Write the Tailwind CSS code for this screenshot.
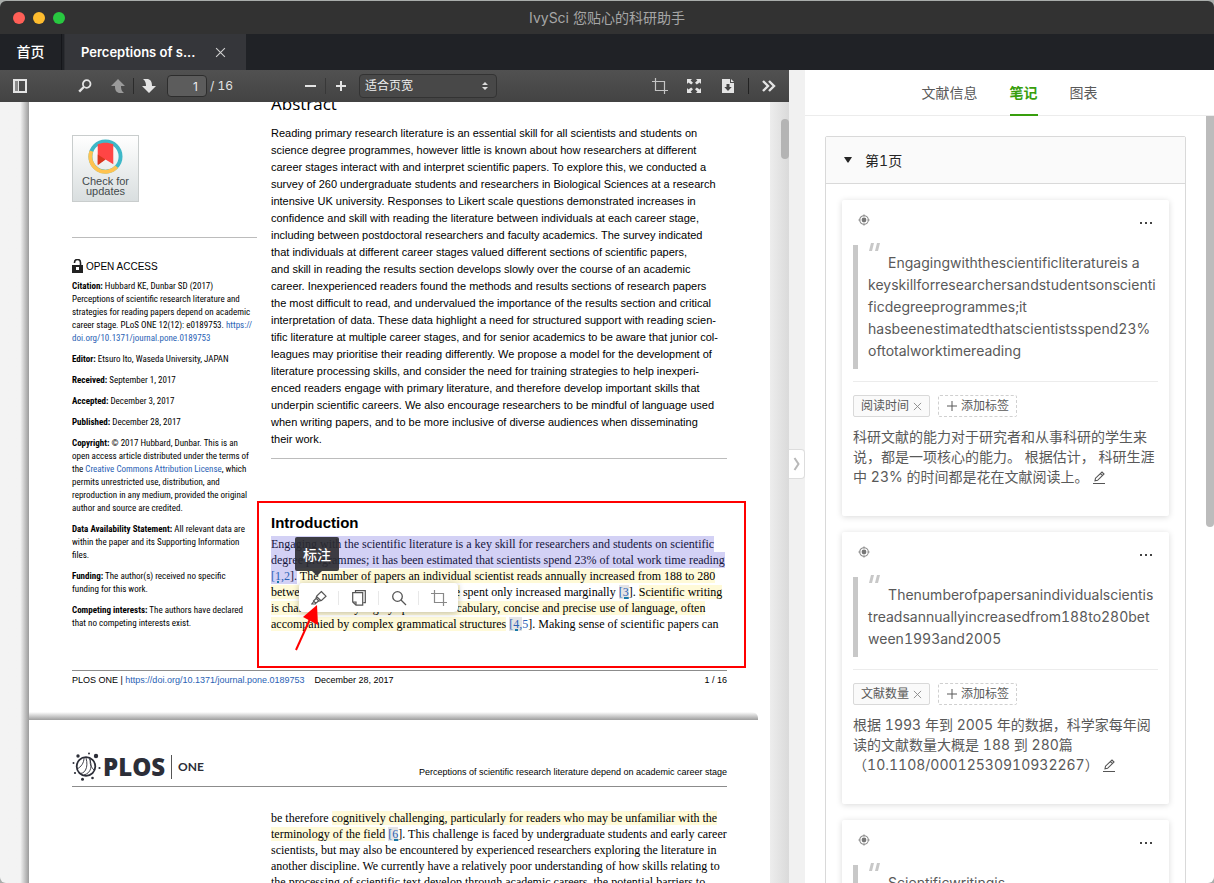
<!DOCTYPE html>
<html lang="zh-CN">
<head>
<meta charset="utf-8">
<title>IvySci 您贴心的科研助手</title>
<script src="https://cdn.jsdelivr.net/npm/@tailwindcss/browser@4"></script>
</head>
<body class="bg-[#a9adab] font-['Inter','Noto_Sans_CJK_SC',sans-serif]">
<svg class="hidden" aria-hidden="true">
  <symbol id="aim" viewBox="0 0 12 12"><g fill="none" stroke="#8c8c8c"><circle cx="6" cy="6" r="4.3" stroke-width="1.1"/><path d="M6 0.4v2M6 9.6v2M.4 6h2M9.6 6h2" stroke-width="1.2"/></g><circle cx="6" cy="6" r="2.4" fill="#777"/></symbol>
  <symbol id="dots" viewBox="0 0 14 4"><path d="M1 1h2v2H1zM6 1h2v2H6zM11 1h2v2h-2z" fill="#444"/></symbol>
  <symbol id="close" viewBox="0 0 10 10"><path d="M1 1l8 8M9 1l-8 8" fill="none" stroke="currentColor"/></symbol>
  <symbol id="plus" viewBox="0 0 12 12"><path d="M6 1v10M1 6h10" fill="none" stroke="currentColor"/></symbol>
  <symbol id="edit" viewBox="0 0 14 14"><path d="M1 12.5h12M3 9.8l.5-2.6L10 1l2 2-6.4 6.3zM8.4 2.6l2 2" fill="none" stroke="#555" stroke-width="1.1"/></symbol>
  <symbol id="crop" viewBox="0 0 16 16"><path d="M3.500 0v12.500H16M0 3.500h12.500V16" fill="none" stroke="currentColor" stroke-width="1.200"/></symbol>
</svg>
<div class="flex h-screen flex-col overflow-hidden rounded-b-md pt-px">
  <header class="relative flex h-[33px] shrink-0 items-center rounded-t-md bg-[#323232] px-[13px]">
    <div class="flex gap-2">
      <button aria-label="关闭窗口" class="size-3 rounded-full bg-[#ff5f57]"></button>
      <button aria-label="最小化" class="size-3 rounded-full bg-[#febc2e]"></button>
      <button aria-label="最大化" class="size-3 rounded-full bg-[#28c840]"></button>
    </div>
    <h1 class="pointer-events-none absolute inset-x-0 text-center text-[14px] leading-5 text-[#a6a6a6]">IvySci 您贴心的科研助手</h1>
  </header>
  <nav class="flex h-9 shrink-0 bg-[#202226] text-[14px] leading-5 font-medium text-white">
    <button class="w-[62px] border-r border-[#15161a]">首页</button>
    <div class="ml-0.5 flex w-[182px] items-center border-l border-[#2c2d31] bg-[#35363a] pl-4">
      <span class="w-[134px] text-[13px] font-semibold">Perceptions of s...</span>
      <button aria-label="关闭标签页" class="text-[#d0d0d0]"><svg class="size-[11px]"><use href="#close"/></svg></button>
    </div>
  </nav>

  <main class="flex min-h-0 flex-1">
    <section class="flex w-[65%] flex-col">
      <div class="flex h-8 shrink-0 items-center bg-linear-to-b from-[#515151] to-[#434343] px-2 text-[#e4e4e4]">
        <div class="flex w-[290px] items-center">
          <button aria-label="侧边栏" class="flex w-6 justify-center"><svg class="h-3.5 w-3.5" viewBox="0 0 14 14"><path d="M1 1h12v12H1z" fill="none" stroke="currentColor" stroke-width="2"/><path d="M2 2h3v10H2z" fill="#8a8a8a"/><path d="M5.500 1v12" stroke="currentColor" stroke-width="1"/></svg></button>
          <button aria-label="查找" class="ml-[41px] flex w-6 justify-center"><svg class="size-3.5" viewBox="0 0 14 14" fill="none" stroke="currentColor"><circle cx="8.700" cy="5" r="3.800" stroke-width="1.800"/><path d="M5.800 8L1.200 12.600" stroke-width="2.400"/></svg></button>
          <button aria-label="上一页" class="ml-[9px] flex w-6 justify-center"><svg class="size-4" viewBox="0 0 16 16"><path d="M8 1l7 7h-4c0 3 .5 5 3 7H9C6 14 5 12 5 8H1z" fill="#9a9a9a"/></svg></button>
          <i class="ml-[3px] h-4 w-px bg-[#2b2b2b]"></i>
          <button aria-label="下一页" class="ml-[3px] flex w-6 justify-center"><svg class="size-4" viewBox="0 0 16 16"><path d="M8 15L1 8h4C5 5 4.500 3 2 1h5c3 1 4 3 4 7h4z" fill="currentColor"/></svg></button>
          <input aria-label="页码" value="1" class="ml-1.5 h-[22px] w-10 rounded-sm border border-[#2d2d2d] bg-[#5c5c5c] pr-2 text-right text-[12px] text-[#eee]">
          <span class="ml-[3px] text-[12px] tabular-nums">/ 16</span>
        </div>
        <button aria-label="缩小" class="flex w-6 justify-center"><svg class="h-3 w-3" viewBox="0 0 12 12"><path d="M1 6h11" stroke="currentColor" stroke-width="2"/></svg></button>
        <i class="ml-[3px] h-4 w-px bg-[#383838]"></i>
        <button aria-label="放大" class="ml-[3px] flex w-6 justify-center"><svg class="h-3 w-3" viewBox="0 0 12 12"><path d="M1 6h10M6 1v10" stroke="currentColor" stroke-width="2"/></svg></button>
        <div class="relative ml-[6px] flex items-center">
          <select aria-label="缩放" class="h-6 w-[138px] appearance-none rounded-sm border border-[#333] bg-[#484848] pl-[5px] text-[12px] text-[#f0f0f0]"><option>适合页宽</option></select>
          <svg class="pointer-events-none absolute right-2 h-2.5 w-2" viewBox="0 0 8 10"><path d="M4 1l3 3H1zM4 9l3-3H1z" fill="#ddd"/></svg>
        </div>
        <div class="ml-auto flex items-center">
          <button aria-label="裁剪" class="mr-2.5 flex w-6 justify-center text-[#c4c4c4]"><svg class="size-4"><use href="#crop"/></svg></button>
          <button aria-label="全屏" class="mr-2.5 flex w-6 justify-center"><svg class="size-3.5" viewBox="0 0 14 14" fill="currentColor"><path d="M0 0h5L3.600 1.400 6 3.800 4.200 5.600 1.400 3.600 0 5zM14 0H9l1.400 1.400L8 3.800 9.800 5.600l2.800-2L14 5zM0 14h5l-1.400-1.400L6 10.200 4.200 8.400l-2.800 2L0 9zM14 14H9l1.400-1.400L8 10.200 9.800 8.400l2.800 2L14 9z"/></svg></button>
          <button aria-label="下载" class="mr-2 flex w-6 justify-center"><svg class="size-3.5" viewBox="0 0 14 14"><path d="M1 0h8v4h4v10H1z" fill="currentColor"/><path d="M10 0l3 3h-3z" fill="currentColor"/><path d="M5.500 5h3v3h2.200L7 12 3.300 8h2.200z" fill="#444"/></svg></button>
          <i class="mr-2 h-4 w-px bg-[#222]"></i>
          <button aria-label="更多工具" class="flex w-6 justify-center"><svg class="h-3 w-4" viewBox="0 0 16 12" fill="none" stroke="currentColor" stroke-width="2.400"><path d="M2 1l5 5-5 5M8 1l5 5-5 5"/></svg></button>
        </div>
      </div>

      <div class="relative flex min-h-0 flex-1 overflow-hidden font-['Liberation_Sans',Arial,sans-serif] text-black">
        <div class="w-[29px] shrink-0 bg-linear-to-r from-[#f3f3f3] from-70% to-[#9c9c9c]"></div>
        <div class="flex min-w-0 flex-1 flex-col bg-white">
        <article class="flex h-[610px] shrink-0 flex-col px-[43px]">
          <div class="flex flex-1 gap-3.5">
            <aside class="w-[185px] shrink-0 pt-[33px] font-['Roboto_Condensed','Open_Sans_Condensed','Liberation_Sans',sans-serif] text-[9px] leading-[13px] whitespace-nowrap">
              <a href="#" class="flex size-[67px] flex-col items-center border border-[#c9cdcd] bg-linear-to-b from-white to-[#d9dedf] pt-[3px] font-['Liberation_Sans'] text-[11px] leading-[10px] text-[#444b4d]">
                <svg class="mb-0.5 size-[35px] shrink-0" viewBox="0 0 36 36" fill="none"><circle cx="18" cy="18" r="15.500" stroke="#3eb8c8" stroke-width="4"/><path d="M3.500 12.500A15.500 15.500 0 0 0 29.500 28.500" stroke="#ffc350" stroke-width="4"/><path d="M10 5.500c5-2.300 11-2.300 16 0V26l-8-5-8 5z" fill="#ff4545"/><path d="M10 16l8 5-8 6z" fill="#d8361d"/></svg>
                <span>Check for</span><span>updates</span>
              </a>
              <hr class="mt-[35px] border-[#bcbcbc]">
              <p class="mt-[17px] flex h-[18px] items-end gap-[3px] font-['Liberation_Sans'] text-[10px]"><svg class="h-3.5 w-[11px]" viewBox="0 0 11 14"><path d="M0 6h11v8H0z" fill="#222"/><path d="M2.500 4V3.500a3 3 0 0 1 6 0V6" fill="none" stroke="#222" stroke-width="1.600"/><path d="M4 8h3v3H4z" fill="#fff"/></svg>OPEN ACCESS</p>
              <div class="mt-[7px] flex flex-col gap-2">
                <p><b>Citation:</b> Hubbard KE, Dunbar SD (2017)<br>Perceptions of scientific research literature and<br>strategies for reading papers depend on academic<br>career stage. PLoS ONE 12(12): e0189753. <a href="#" class="text-[#2a62b5]">https://<br>doi.org/10.1371/journal.pone.0189753</a></p>
                <p><b>Editor:</b> Etsuro Ito, Waseda University, JAPAN</p>
                <p><b>Received:</b> September 1, 2017</p>
                <p><b>Accepted:</b> December 3, 2017</p>
                <p><b>Published:</b> December 28, 2017</p>
                <p><b>Copyright:</b> © 2017 Hubbard, Dunbar. This is an<br>open access article distributed under the terms of<br>the <a href="#" class="text-[#2a62b5]">Creative Commons Attribution License</a>, which<br>permits unrestricted use, distribution, and<br>reproduction in any medium, provided the original<br>author and source are credited.</p>
                <p><b>Data Availability Statement:</b> All relevant data are<br>within the paper and its Supporting Information<br>files.</p>
                <p><b>Funding:</b> The author(s) received no specific<br>funding for this work.</p>
                <p><b>Competing interests:</b> The authors have declared<br>that no competing interests exist.</p>
              </div>
            </aside>
            <div class="min-w-0 flex-1 whitespace-nowrap">
              <h2 class="-mt-2 font-['Open_Sans',sans-serif] text-[17px] leading-5">Abstract</h2>
              <p class="mt-[11px] text-[11px] leading-[17px]">Reading primary research literature is an essential skill for all scientists and students on<br>science degree programmes, however little is known about how researchers at different<br>career stages interact with and interpret scientific papers. To explore this, we conducted a<br>survey of 260 undergraduate students and researchers in Biological Sciences at a research<br>intensive UK university. Responses to Likert scale questions demonstrated increases in<br>confidence and skill with reading the literature between individuals at each career stage,<br>including between postdoctoral researchers and faculty academics. The survey indicated<br>that individuals at different career stages valued different sections of scientific papers,<br>and skill in reading the results section develops slowly over the course of an academic<br>career. Inexperienced readers found the methods and results sections of research papers<br>the most difficult to read, and undervalued the importance of the results section and critical<br>interpretation of data. These data highlight a need for structured support with reading scien-<br>tific literature at multiple career stages, and for senior academics to be aware that junior col-<br>leagues may prioritise their reading differently. We propose a model for the development of<br>literature processing skills, and consider the need for training strategies to help inexperi-<br>enced readers engage with primary literature, and therefore develop important skills that<br>underpin scientific careers. We also encourage researchers to be mindful of language used<br>when writing papers, and to be more inclusive of diverse audiences when disseminating<br>their work.</p>
              <hr class="mt-[10px] border-[#bcbcbc]">
              <div class="relative mt-[54px]">
                <h2 class="text-[15px] leading-5 font-bold">Introduction</h2>
                <p class="mt-[3px] font-['Liberation_Serif',serif] text-[12px] leading-4"><span class="bg-[#d3d1f5] py-px text-[#161640]">Engaging with the scientific literature is a key skill for researchers and students on scientific<br>degree programmes; it has been estimated that scientists spend 23% of total work time reading</span><br><span class="bg-[#d3d1f5] py-px text-[#161640]"><a href="#" class="text-[#2a62b5]"><u class="decoration-[#187aa8] decoration-2">[1,</u>2</a>].</span> <span class="bg-[#fffad8]">The number of papers an individual scientist reads annually increased from 188 to 280</span><br><span class="bg-[#fffad8]">between 1993 and 2005, while the time</span> spent only increased marginally <a href="#" class="bg-[#e4e4e4] text-[#2a62b5] underline decoration-[#187aa8] decoration-2">[3</a>]. <span class="bg-[#fffad8]">Scientific writing</span><br><span class="bg-[#fffad8]">is characterised by highly specialist vocabulary, concise and precise use of language, often</span><br><span class="bg-[#fffad8]">accompanied by complex grammatical structures</span> <a href="#" class="text-[#2a62b5]"><u class="bg-[#e4e4e4] decoration-[#187aa8] decoration-2">[4,</u>5</a>]. Making sense of scientific papers can</p>
                <div class="absolute -top-3 -right-[19px] -left-3.5 h-[167px] border-2 border-[#f00]"></div>
                <div class="absolute top-6 left-6 flex h-[34px] w-11 items-center justify-center rounded-xs bg-[#2b2b30]/90 font-['Noto_Sans_CJK_SC'] text-[14px] leading-5 font-medium text-white">标注<svg class="absolute top-full h-1.5 w-3" viewBox="0 0 12 6"><path d="M1 0h10L6 5z" fill="#3a3a40"/></svg></div>
                <div class="absolute top-[70px] left-7 flex h-[29px] w-[159px] items-center rounded-sm bg-white text-[#555] shadow-[0_1px_6px_rgba(0,0,0,.25)]">
                  <button aria-label="标注" class="flex flex-1 justify-center"><svg class="size-4" viewBox="0 0 16 16" fill="none" stroke="currentColor" stroke-width="1.200"><path d="M10.300 1.500L15 6.200 10.500 10.500 7.800 11 5 8.200 5.700 6zM6 7l4 3.800M5 8.500L2.500 11l2.300 2.200L7.500 11M2.800 11.500L.8 14h3.500l.7-1"/></svg></button>
                  <i class="h-3.5 w-px bg-[#e8e8e8]"></i>
                  <button aria-label="复制" class="flex flex-1 justify-center"><svg class="size-4" viewBox="0 0 16 16" fill="none" stroke="currentColor" stroke-width="1.200"><path d="M4.500 2.700V.7h9.800v12h-2"/><path d="M1.700 2.700h10v12.500H5L1.700 12zM1.700 12H5v3"/></svg></button>
                  <i class="h-3.5 w-px bg-[#e8e8e8]"></i>
                  <button aria-label="搜索" class="flex flex-1 justify-center"><svg class="size-4" viewBox="0 0 16 16" fill="none" stroke="currentColor" stroke-width="1.300"><circle cx="6.500" cy="6.500" r="4.800"/><path d="M10 10l5 5"/></svg></button>
                  <i class="h-3.5 w-px bg-[#e8e8e8]"></i>
                  <button aria-label="截图" class="flex flex-1 justify-center text-[#888]"><svg class="size-4"><use href="#crop"/></svg></button>
                </div>
                <svg class="absolute top-[91px] left-[22px] h-[48px] w-[28px]" viewBox="0 0 28 48"><path d="M3 46L17 15" stroke="#f00" stroke-width="2"/><path d="M24 1L25 21 10 13z" fill="#f00"/></svg>
              </div>
            </div>
          </div>
          <footer class="mb-[24px] flex justify-between border-t border-[#8c8c8c] pt-0.5 text-[9px] leading-[15px] whitespace-pre"><span>PLOS ONE | <a href="#" class="text-[#2a62b5]">https://doi.org/10.1371/journal.pone.0189753</a>    December 28, 2017</span><span>1 / 16</span></footer>
        </article>
        <div class="mr-3 h-2 shrink-0 rounded-tr-md bg-linear-to-b from-white to-[#9e9e9e]"></div>
        <article class="flex-1 px-[43px]">
          <div class="flex h-[67px] items-end justify-between border-b border-[#8c8c8c]">
            <div class="mb-[5px] flex items-center text-[#2c2e38]">
              <svg class="size-[29px]" viewBox="0 0 29 29"><g fill="none" stroke="#2c2e38"><circle cx="14" cy="14.500" r="9.300" stroke-width="1.800"/><path d="M5 17c4-2 7-6 7-11M7 21c5 2 10-5 7-15M12 23c7-2 9-9 5-17M19 7c-2 4 0 8 3 11" stroke-width=".9"/></g><g fill="#2c2e38"><circle cx="6" cy="4" r="1.700"/><circle cx="24" cy="4" r="2.200"/><circle cx="17" cy="1.500" r="1"/><circle cx="1.500" cy="11" r="1"/><circle cx="27.500" cy="16" r="1.100"/><circle cx="3" cy="21" r="1.100"/><circle cx="10.500" cy="27.200" r="1.500"/><circle cx="20.500" cy="26" r="1.300"/></g></svg>
              <b class="ml-0.5 font-['Open_Sans'] text-[24px] leading-7 font-extrabold">PLOS</b>
              <i class="ml-[6px] h-6 w-px bg-[#555]"></i>
              <span class="ml-[6px] font-['Lato'] text-[12px] font-bold">ONE</span>
            </div>
            <p class="mb-[6px] text-[9px] leading-[15px]">Perceptions of scientific research literature depend on academic career stage</p>
          </div>
          <p class="mt-[23px] ml-[199px] font-['Liberation_Serif',serif] text-[12px] leading-4 whitespace-nowrap">be therefore <span class="bg-[#fffad8]">cognitively challenging, particularly for readers who may be unfamiliar with the</span><br><span class="bg-[#fffad8]">terminology of the field</span> <a href="#" class="bg-[#e4e4e4] text-[#2a62b5] underline decoration-[#187aa8] decoration-2">[6</a>]. This challenge is faced by undergraduate students and early career<br>scientists, but may also be encountered by experienced researchers exploring the literature in<br>another discipline. We currently have a relatively poor understanding of how skills relating to<br>the processing of scientific text develop through academic careers, the potential barriers to</p>
        </article>
        </div>
        <div class="w-[19px] shrink-0 bg-linear-to-r from-[#ededed] to-[#dadada]"><div class="mt-[17px] ml-auto h-10 w-2 rounded-sm bg-[#b4b4b4]"></div></div>
      </div>
    </section>

    <div class="flex w-4 shrink-0 flex-col bg-[#f1f1f1] pt-[379px]">
      <button aria-label="收起侧栏" class="flex h-[30px] items-center justify-center rounded-r-sm border border-l-0 border-[#ddd] bg-white"><svg class="h-3.5 w-2" viewBox="0 0 8 14"><path d="M1.500 1l4 6-4 6" fill="none" stroke="#b8b8b8" stroke-width="2"/></svg></button>
    </div>

    <section class="flex min-w-0 flex-1 flex-col bg-white text-[14px] text-[#595959] tabular-nums">
      <div class="flex h-[46px] shrink-0 justify-center gap-8 border-b border-[#ececec]">
        <button>文献信息</button>
        <button class="-mb-px border-b-2 border-[#389e0d] font-bold text-[#389e0d]">笔记</button>
        <button>图表</button>
      </div>
      <div class="flex min-h-0 flex-1 overflow-hidden">
        <div class="min-w-0 flex-1 p-5">
          <div class="rounded-xs border border-[#d9d9d9]">
            <button class="flex h-[47px] w-full items-center border-b border-[#d9d9d9] bg-[#fafafa] pl-[18px] text-[#262626]"><svg class="mr-[13px] h-1.5 w-2" viewBox="0 0 8 6"><path d="M0 0h8L4.500 5.500h-1z" fill="#262626"/></svg>第1页</button>
            <div class="flex flex-col gap-4 p-4">
              <article class="rounded-xs px-[11px] pb-[29px] shadow-[0_1px_6px_rgba(0,0,0,.15)]">
                <div class="flex h-[45px] justify-between pr-[5px] pl-[5px]"><button aria-label="定位" class="mt-3.5 size-3"><svg class="size-3"><use href="#aim"/></svg></button><button aria-label="更多" class="mt-[21px] h-1"><svg class="h-1 w-3.5"><use href="#dots"/></svg></button></div>
                <blockquote class="relative border-l-5 border-[#c8c8c8] py-[7px] pl-2.5 leading-[22px] whitespace-nowrap"><svg class="absolute -top-0.5 left-[11px] h-2 w-[11px]" viewBox="0 0 11 8"><path d="M2 0h3L3 8H0zM8 0h3L9 8H6z" fill="#c8c8c8"/></svg><span class="ml-5">Engagingwiththescientificliteratureis a</span><br>keyskillforresearchersandstudentsonscienti<br>ficdegreeprogrammes;it<br>hasbeenestimatedthatscientistsspend23%<br>oftotalworktimereading</blockquote>
                <hr class="mt-3 border-[#ececec]">
                <div class="mt-[13px] flex gap-2 text-[12px] leading-5">
                  <span class="flex h-[22px] items-center gap-1 rounded-xs border border-[#d9d9d9] bg-[#fafafa] px-[7px]">阅读时间<button aria-label="删除标签" class="text-[#888]"><svg class="size-[9px]"><use href="#close"/></svg></button></span>
                  <button class="flex h-[22px] items-center gap-[3px] rounded-xs border border-dashed border-[#d0d0d0] px-[7px]"><svg class="size-3"><use href="#plus"/></svg>添加标签</button>
                </div>
                <p class="mt-[10px] leading-5 whitespace-nowrap">科研文献的能力对于研究者和从事科研的学生来<br>说，都是一项核心的能力。 根据估计， 科研生涯<br>中 23% 的时间都是花在文献阅读上。 <button aria-label="编辑" class="align-middle"><svg class="size-3.5"><use href="#edit"/></svg></button></p>
              </article>
              <article class="rounded-xs px-[11px] pb-[29px] shadow-[0_1px_6px_rgba(0,0,0,.15)]">
                <div class="flex h-[45px] justify-between pr-[5px] pl-[5px]"><button aria-label="定位" class="mt-3.5 size-3"><svg class="size-3"><use href="#aim"/></svg></button><button aria-label="更多" class="mt-[21px] h-1"><svg class="h-1 w-3.5"><use href="#dots"/></svg></button></div>
                <blockquote class="relative border-l-5 border-[#c8c8c8] py-[7px] pl-2.5 leading-[22px] whitespace-nowrap"><svg class="absolute -top-0.5 left-[11px] h-2 w-[11px]" viewBox="0 0 11 8"><path d="M2 0h3L3 8H0zM8 0h3L9 8H6z" fill="#c8c8c8"/></svg><span class="ml-5">Thenumberofpapersanindividualscientis</span><br>treadsannuallyincreasedfrom188to280bet<br>ween1993and2005</blockquote>
                <hr class="mt-3 border-[#ececec]">
                <div class="mt-[13px] flex gap-2 text-[12px] leading-5">
                  <span class="flex h-[22px] items-center gap-1 rounded-xs border border-[#d9d9d9] bg-[#fafafa] px-[7px]">文献数量<button aria-label="删除标签" class="text-[#888]"><svg class="size-[9px]"><use href="#close"/></svg></button></span>
                  <button class="flex h-[22px] items-center gap-[3px] rounded-xs border border-dashed border-[#d0d0d0] px-[7px]"><svg class="size-3"><use href="#plus"/></svg>添加标签</button>
                </div>
                <p class="mt-[10px] leading-5 whitespace-nowrap">根据 1993 年到 2005 年的数据，科学家每年阅<br>读的文献数量大概是 188 到 280篇<br>（10.1108/00012530910932267） <button aria-label="编辑" class="align-middle"><svg class="size-3.5"><use href="#edit"/></svg></button></p>
              </article>
              <article class="rounded-xs px-[11px] pb-[29px] shadow-[0_1px_6px_rgba(0,0,0,.15)]">
                <div class="flex h-[45px] justify-between pr-[5px] pl-[5px]"><button aria-label="定位" class="mt-3.5 size-3"><svg class="size-3"><use href="#aim"/></svg></button><button aria-label="更多" class="mt-[21px] h-1"><svg class="h-1 w-3.5"><use href="#dots"/></svg></button></div>
                <blockquote class="relative border-l-5 border-[#c8c8c8] py-[7px] pl-2.5 leading-[22px] whitespace-nowrap"><svg class="absolute -top-0.5 left-[11px] h-2 w-[11px]" viewBox="0 0 11 8"><path d="M2 0h3L3 8H0zM8 0h3L9 8H6z" fill="#c8c8c8"/></svg><span class="ml-5">Scientificwritingis</span></blockquote>
              </article>
            </div>
          </div>
        </div>
        <div class="w-2 shrink-0"><div class="h-[411px] rounded-b-sm bg-[#bcbcbc]"></div></div>
      </div>
    </section>
  </main>
</div>
</body>
</html>
